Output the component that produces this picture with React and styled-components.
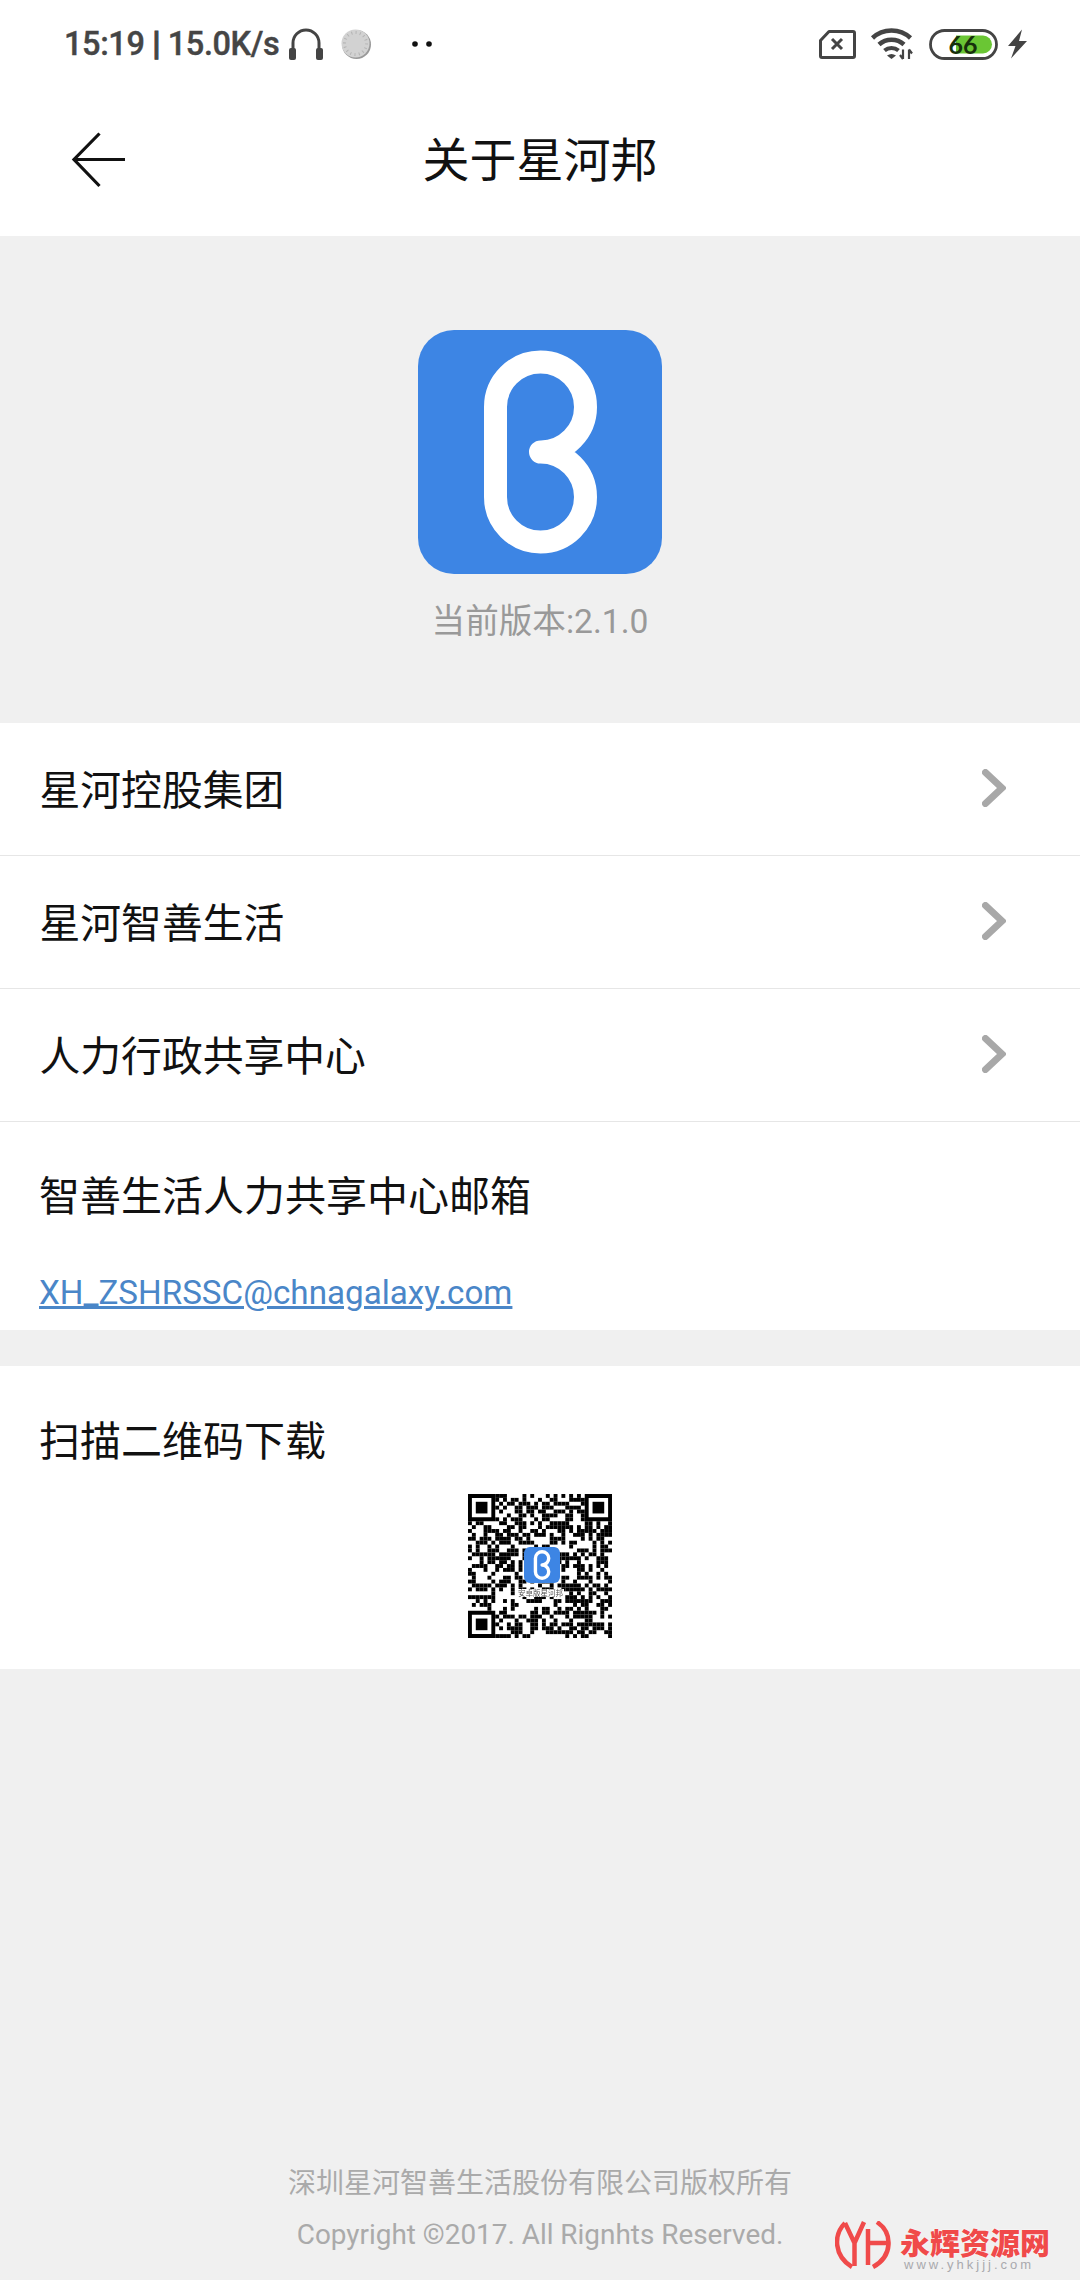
import React from "react";
import styled, { createGlobalStyle } from "styled-components";

const Global = createGlobalStyle`
  html, body { margin: 0; padding: 0; background: #f0f0f0; }
  * { box-sizing: border-box; }
`;
const CJK = `"Roboto", "Noto Sans CJK SC", sans-serif`;

const Page = styled.div`
  position: relative; width: 1080px; height: 2280px; overflow: hidden;
  display: flex; flex-direction: column; background: #f0f0f0; font-family: ${CJK};
`;
const StatusBar = styled.div`
  height: 88px; background: #fff; display: flex; align-items: center;
  padding: 0 52px 0 64px; color: #444;
`;
const StatusText = styled.span`
  font: 500 32.5px "Roboto", sans-serif; letter-spacing: -0.4px; color: #454545; margin-right: 9px; white-space: nowrap;
  -webkit-text-stroke: 0.4px #454545;
`;
const StatusPipe = styled.b`font-weight: 900; -webkit-text-stroke: 1px #454545;`;
const Grow = styled.div`flex: 1;`;
const Svg = styled.svg`display: block; flex: none; margin-left: ${p => p.$ml || 0}px;`;
const Header = styled.header`
  height: 148px; background: #fff; position: relative; display: flex; align-items: center; justify-content: center;
`;
const BackIcon = styled.svg`position: absolute; left: 70px; top: 42px;`;
const Title = styled.h1`
  margin: 0 0 11px 0; font: 400 47px "Noto Sans CJK SC", sans-serif; color: #111;
`;
const About = styled.section`
  height: 487px; padding-top: 94px; display: flex; flex-direction: column; align-items: center;
`;
const Version = styled.div`
  margin-top: 26px; font-size: 33.6px; line-height: 44px; color: #999;
`;
const List = styled.div`background: #fff;`;
const Row = styled.div`
  height: 133px; display: flex; align-items: center; justify-content: space-between;
  padding: 0 74px 3px 39.500px; border-bottom: 1px solid #e6e6e6;
  font: 400 40.800px "Noto Sans CJK SC", sans-serif; color: #111;
`;
const MailBlock = styled.div`
  background: #fff; height: 208px; padding: 40px 39px 0; margin-bottom: 36px;
`;
const BlockTitle = styled.div`
  font: 400 41px/62px "Noto Sans CJK SC", sans-serif; color: #111;
`;
const MailLink = styled.a`
  display: block; margin-top: 47px; font: 400 33.2px/44px "Roboto", sans-serif; color: #4a86c8; text-decoration: underline;
`;
const QrBlock = styled.div`
  background: #fff; height: 303px; padding: 41px 39px 0; display: flex; flex-direction: column;
`;
const QrWrap = styled.div`
  align-self: center; position: relative; width: 144px; height: 144px; margin-top: 25px;
  filter: blur(0.45px);
`;
const QrBadge = styled.div`
  position: absolute; left: 56px; top: 53px;
`;
const QrCaption = styled.span`
  position: absolute; left: 49px; top: 95px; width: 47px; text-align: center; background: #fff;
  font: 400 7.5px/8px "Noto Sans CJK SC", serif; color: #555; white-space: nowrap;
`;
const Footer = styled.footer`
  margin-top: auto; padding-bottom: 19px; text-align: center; color: #aaa;
`;
const FooterCn = styled.div`line-height: 52px; font-size: 28px; position: relative; top: 1px;`;
const FooterEn = styled.div`line-height: 52px; font-size: 27.9px;`;
const Watermark = styled.div`
  position: absolute; left: 835px; top: 2221px; display: flex; gap: 9px;
`;
const MarkText = styled.div`display: flex; flex-direction: column; align-items: flex-start; padding-top: 4px;`;
const MarkCn = styled.span`
  font: 900 30px/32px "Noto Sans CJK SC", sans-serif; color: #f04a4a; white-space: nowrap;
  text-shadow: 0 0 2px #fff;
`;
const MarkUrl = styled.span`
  font: 400 13px/14px "Liberation Sans", sans-serif; color: #a9a9ad; letter-spacing: 3px; margin: 1px 0 0 4px; white-space: nowrap;
`;

const LogoB = ({ size, radius = 36 }) => (
  <Svg width={size} height={size} viewBox="0 0 244 244">
    <rect width="244" height="244" rx={radius} fill="#3d85e4" />
    <path d="M123 122a45 45 0 0 0 44.500 -45a45 45 0 0 0 -45 -45a45 45 0 0 0 -45 45v90a45 45 0 0 0 45 45a45 45 0 0 0 45 -45a45 45 0 0 0 -45 -45z" fill="none" stroke="#fff" strokeWidth="23" strokeLinecap="round" strokeLinejoin="round" />
  </Svg>
);

const Chevron = () => (
  <Svg width="24" height="38" viewBox="0 0 24 38">
    <path d="M3.500 3.500L20 19L3.500 34.500" fill="none" stroke="#a8a8a8" strokeWidth="7" strokeLinecap="round" strokeLinejoin="miter" />
  </Svg>
);

function qrCells() {
  const n = 37, cells = [];
  let seed = 20170519;
  const rnd = () => { seed = (seed * 1664525 + 1013904223) >>> 0; return (seed >>> 16) / 65536; };
  const inF = (x, y, a, b) => x >= a && x < a + 8 && y >= b && y < b + 8;
  for (let y = 0; y < n; y++) for (let x = 0; x < n; x++) {
    if (inF(x, y, -1, -1) || inF(x, y, n - 7, -1) || inF(x, y, -1, n - 7)) continue;
    if (rnd() < 0.52) cells.push([x, y]);
  }
  return cells;
}
const CELLS = qrCells();
const Finder = ({ x, y }) => (
  <g fill="#000">
    <path fillRule="evenodd" d={`M${x} ${y}h7v7h-7zM${x + 1} ${y + 1}v5h5v-5z`} />
    <rect x={x + 2} y={y + 2} width="3" height="3" />
  </g>
);
const QrPattern = () => (
  <Svg width="144" height="144" viewBox="0 0 37 37">
    {CELLS.map(([x, y]) => <rect key={`${x}-${y}`} x={x} y={y} width="1" height="1" fill="#000" />)}
    <Finder x={0} y={0} />
    <Finder x={30} y={0} />
    <Finder x={0} y={30} />
  </Svg>
);

export default function App() {
  return (
    <Page>
      <Global />
      <StatusBar>
        <StatusText>15:19 <StatusPipe>|</StatusPipe> 15.0K/s</StatusText>
        <Svg width="36" height="33" viewBox="0 0 36 33">
          <path d="M5 26V15a13 13 0 0 1 26 0v11" fill="none" stroke="#444" strokeWidth="3" />
          <rect x="1" y="20" width="7" height="12" rx="2" fill="#444" />
          <rect x="28" y="20" width="7" height="12" rx="2" fill="#444" />
        </Svg>
        <Svg $ml={17} width="31" height="32" viewBox="0 0 31 32">
          <circle cx="15.500" cy="16.500" r="14.500" fill="#999" />
          <circle cx="14.500" cy="15.500" r="14" fill="#d2d2d2" />
          <circle cx="14.500" cy="15.500" r="11" fill="none" stroke="#b4b4b4" strokeWidth="3" strokeDasharray="1 3.300" />
        </Svg>
        <Svg $ml={40} width="20" height="6" viewBox="0 0 20 6">
          <circle cx="3" cy="3" r="2.800" fill="#111" />
          <circle cx="17" cy="3" r="2.800" fill="#111" />
        </Svg>
        <Grow />
        <Svg width="37" height="29" viewBox="0 0 37 29">
          <path d="M10 1.500H34a1.500 1.500 0 0 1 1.500 1.500V26a1.500 1.500 0 0 1 -1.500 1.500H3A1.500 1.500 0 0 1 1.500 26V10.500z" fill="none" stroke="#444" strokeWidth="3" strokeLinejoin="round" />
          <path d="M13 9l10 10M23 9L13 19" stroke="#444" strokeWidth="3" />
        </Svg>
        <Svg $ml={14} width="44" height="32" viewBox="0 0 44 32">
          <path d="M2.500 10C13 0 30 0 40.500 10" fill="none" stroke="#444" strokeWidth="4.500" />
          <path d="M9 16.500C16 10 27 10 34 16.500" fill="none" stroke="#444" strokeWidth="4.500" />
          <path d="M14.500 22.500C18.500 19 24.500 19 28.500 22.500" fill="none" stroke="#444" strokeWidth="4" />
          <path d="M17 27.500c3-2 6-2 9 0l-4.500 3.500z" fill="#444" />
          <path d="M33 21.500V31M33 31l-3-4M39 31V21.500M39 21.500l3 4" fill="none" stroke="#444" strokeWidth="2.200" />
        </Svg>
        <Svg $ml={15} width="69" height="31" viewBox="0 0 69 31">
          <rect x="1.500" y="1.500" width="66" height="28" rx="14" fill="#fff" stroke="#444" strokeWidth="2.800" />
          <path d="M27 6.500H54a9 9 0 0 1 0 18H27z" fill="#6ac634" />
          <text x="34" y="25" textAnchor="middle" fontFamily="Lato, sans-serif" fontWeight="700" fontSize="25" fill="#17300c">66</text>
        </Svg>
        <Svg $ml={9} width="21" height="30" viewBox="0 0 21 30">
          <path d="M15 0.500L1 17h7.500L4 29.500 20 12h-8z" fill="#444" />
        </Svg>
      </StatusBar>
      <Header>
        <BackIcon width="58" height="60" viewBox="0 0 58 60">
          <path d="M29.500 3.500L4 29.500 29.500 56M4 29.500H55" fill="none" stroke="#111" strokeWidth="3.200" />
        </BackIcon>
        <Title>关于星河邦</Title>
      </Header>
      <About>
        <LogoB size={244} />
        <Version>当前版本:2.1.0</Version>
      </About>
      <List>
        <Row>星河控股集团<Chevron /></Row>
        <Row>星河智善生活<Chevron /></Row>
        <Row>人力行政共享中心<Chevron /></Row>
      </List>
      <MailBlock>
        <BlockTitle>智善生活人力共享中心邮箱</BlockTitle>
        <MailLink>XH_ZSHRSSC@chnagalaxy.com</MailLink>
      </MailBlock>
      <QrBlock>
        <BlockTitle>扫描二维码下载</BlockTitle>
        <QrWrap>
          <QrPattern />
          <QrBadge><LogoB size={36} radius={40} /></QrBadge>
          <QrCaption>安卓版星河邦</QrCaption>
        </QrWrap>
      </QrBlock>
      <Footer>
        <FooterCn>深圳星河智善生活股份有限公司版权所有</FooterCn>
        <FooterEn>Copyright ©2017. All Rignhts Reserved.</FooterEn>
      </Footer>
      <Watermark>
        <Svg width="56" height="48" viewBox="0 0 56 48">
          <path d="M10 2C-2 14 -1 35 17 46M42 1C58 12 58 35 38 46" fill="none" stroke="#f04a4a" strokeWidth="4.500" />
          <path d="M10 2L19.500 22V45M29 1L19.500 22M33 8V44M33 22H53" fill="none" stroke="#f04a4a" strokeWidth="4.500" />
        </Svg>
        <MarkText>
          <MarkCn>永辉资源网</MarkCn>
          <MarkUrl>www.yhkjjj.com</MarkUrl>
        </MarkText>
      </Watermark>
    </Page>
  );
}
